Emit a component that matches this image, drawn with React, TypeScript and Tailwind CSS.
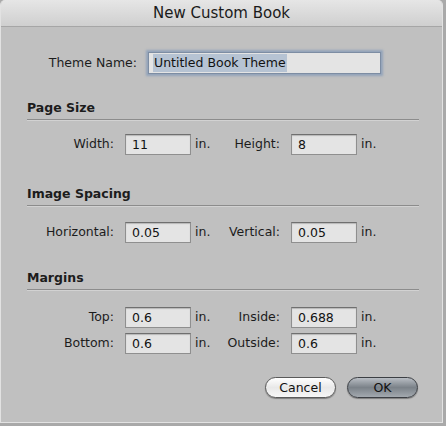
import React from 'react';

const font = { fontFamily: '"DejaVu Sans", "Liberation Sans", sans-serif' };

function Field({ value }: { value: string }) {
  return (
    <div className="w-[66px] h-[21px] border border-[#8f8f8f] border-t-[#6f6f6f] bg-[#e4e4e4] shadow-[inset_0_1px_1px_rgba(0,0,0,0.2)] pl-[6px] text-[12.5px] leading-[19px] text-[#111]">
      {value}
    </div>
  );
}

function Row({ l1, v1, l2, v2 }: { l1: string; v1: string; l2: string; v2: string }) {
  return (
    <div className="flex items-center h-[21px] text-[12.5px] text-[#1c1c1c]">
      <div className="w-[113px] text-right">{l1}</div>
      <div className="ml-[11px]"><Field value={v1} /></div>
      <div className="ml-[4px] w-[30px]">in.</div>
      <div className="w-[55px] text-right">{l2}</div>
      <div className="ml-[11px]"><Field value={v2} /></div>
      <div className="ml-[4px]">in.</div>
    </div>
  );
}

function Heading({ children }: { children: React.ReactNode }) {
  return (
    <div className="ml-[26px] w-[392px]">
      <div className="text-[12.5px] font-bold text-[#1c1c1c] leading-[15px]">{children}</div>
      <div className="mt-[4px] h-[2px] bg-[#8c8c8c] border-b border-[#d2d2d2]" />
    </div>
  );
}

export default function App() {
  return (
    <div className="w-[446px] h-[426px] bg-[#a9a9a9]" style={font}>
      <div className="w-[443px] h-[423px] bg-[#c0c0c0] border-l border-r border-b border-[#e2e2e2] rounded-t-[5px] overflow-hidden">
        <div className="h-[27px] bg-gradient-to-b from-[#e6e6e6] to-[#cfcfcf] border-b border-[#a6a6a6] flex items-center justify-center text-[15px] text-[#1a1a1a]">
          New Custom Book
        </div>

        <div className="flex items-center mt-[25px] h-[22px] text-[12.5px] text-[#1c1c1c]">
          <div className="w-[136px] text-right">Theme Name:</div>
          <div className="ml-[11px] w-[233px] h-[22px] bg-[#e4e4e4] border border-[#7d8da3] shadow-[0_0_2px_2px_rgba(110,140,180,0.55)] pl-[4px] flex items-center">
            <span className="bg-[#b6c3d3] px-[1px] leading-[18px] text-[#111]">Untitled Book Theme</span>
          </div>
        </div>

        <div className="mt-[26px]"><Heading>Page Size</Heading></div>
        <div className="mt-[13px]"><Row l1="Width:" v1="11" l2="Height:" v2="8" /></div>

        <div className="mt-[31px]"><Heading>Image Spacing</Heading></div>
        <div className="mt-[15px]"><Row l1="Horizontal:" v1="0.05" l2="Vertical:" v2="0.05" /></div>

        <div className="mt-[27px]"><Heading>Margins</Heading></div>
        <div className="mt-[16px] flex flex-col gap-[5px]">
          <Row l1="Top:" v1="0.6" l2="Inside:" v2="0.688" />
          <Row l1="Bottom:" v1="0.6" l2="Outside:" v2="0.6" />
        </div>

        <div className="mt-[23px] flex justify-end pr-[24px] gap-[11px]">
          <button className="w-[71px] h-[21px] rounded-full border border-[#5a5a5a] bg-gradient-to-b from-[#ffffff] via-[#e8e8e8] to-[#f6f6f6] shadow-[0_1px_1px_rgba(0,0,0,0.35)] text-[12.5px] leading-[19px] text-[#111]">
            Cancel
          </button>
          <button className="w-[71px] h-[21px] rounded-full border border-[#3c3f44] bg-gradient-to-b from-[#b9bec4] via-[#7b8289] to-[#a3a9af] shadow-[0_1px_1px_rgba(0,0,0,0.35)] text-[12.5px] leading-[19px] text-[#111]">
            OK
          </button>
        </div>
      </div>
    </div>
  );
}
